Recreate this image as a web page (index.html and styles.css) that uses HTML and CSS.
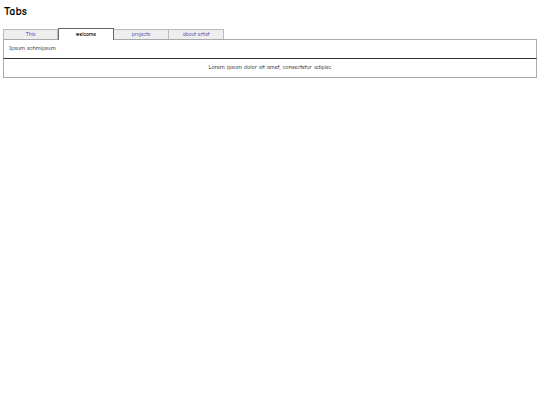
FILE: index.html
```html
<!DOCTYPE html>
<html>
<head>
<meta charset="utf-8">
<link rel="stylesheet" href="styles.css">
</head>
<body>
<h1 class="title">Tabs</h1>
<div class="tabs">
  <div class="tab">This</div>
  <div class="tab active">welcome</div>
  <div class="tab">projects</div>
  <div class="tab">about artist</div>
</div>
<div class="panel first">Ipsum schmipsum.</div>
<div class="panel second">Lorem ipsum dolor sit amet, consectetur adipisc</div>
</body>
</html>
```
FILE: styles.css
```css
body {
  margin: 0;
  padding: 2px 3px;
  font-family: "Comic Sans MS", "Comic Neue", "DejaVu Sans", sans-serif;
  background: #fff;
  color: #000;
}
.title {
  margin: 2px 0 0 1px;
  font-size: 12px;
  font-weight: bold;
  line-height: 14px;
}
.tabs {
  display: flex;
  margin-top: 11px;
  align-items: flex-end;
  height: 10px;
}
.tab {
  width: 54px;
  height: 9px;
  background: #eeeeee;
  border: 1px solid #bbbbbb;
  border-bottom: none;
  border-left: none;
  color: #1a1ab0;
  font-size: 5.5px;
  line-height: 9px;
  text-align: center;
}
.tab:first-child {
  border-left: 1px solid #bbbbbb;
  width: 53px;
}
.tab.active {
  background: #fff;
  color: #000;
  font-weight: bold;
  line-height: 10px;
  border: 1px solid #666;
  border-bottom: none;
  position: relative;
  z-index: 1;
  margin-bottom: -1px;
  height: 11px;
}
.panel {
  border: 1px solid #aaaaaa;
  font-size: 6px;
  height: 18px;
  line-height: 18px;
  color: #000;
}
.panel.first {
  padding-left: 5px;
  border-bottom: 1px solid #333;
}
.panel.second {
  border-top: none;
  text-align: center;
}
```
